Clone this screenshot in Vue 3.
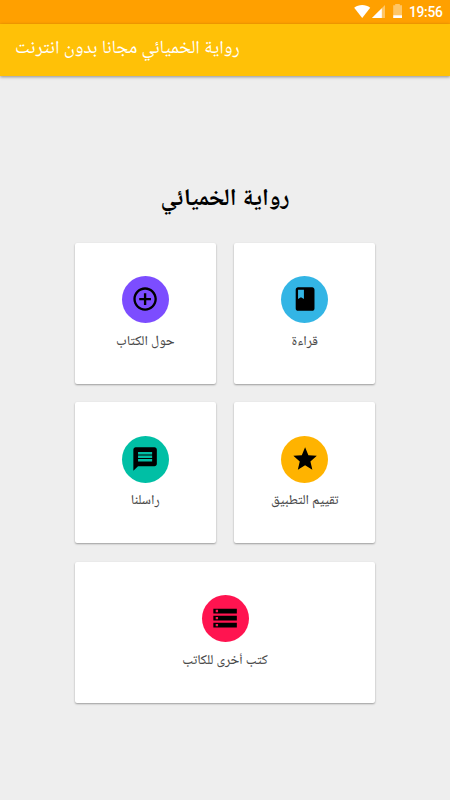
<template>
  <div class="screen">
    <div class="status-bar">
      <svg class="status-icons" width="52" height="24" viewBox="0 0 52 24">
        <path d="M8.2 18 L0.2 7.8 C4.6 4.2 11.8 4.2 16.2 7.8 Z" fill="#fff" />
        <path d="M18 18 L31 5 V18 Z" fill="#fff" fill-opacity="0.4" />
        <path d="M18 18 L27.8 8.2 V18 Z" fill="#fff" />
        <path d="M39.2 5.3 H41.2 V4 H45.8 V5.3 H48 V15.2 H39.2 Z" fill="#fff" fill-opacity="0.4" />
        <path d="M39.2 15.2 H48 V18 H39.2 Z" fill="#fff" />
      </svg>
      <span class="clock">19:56</span>
    </div>

    <header class="app-bar">
      <h1 class="app-title" dir="rtl">رواية الخميائي مجانا بدون انترنت</h1>
    </header>

    <main class="content">
      <h2 class="book-title" dir="rtl">رواية الخميائي</h2>
      <div class="card-grid">
        <button
          v-for="item in items"
          :key="item.id"
          class="card"
          :class="{ 'card-wide': item.wide }"
          type="button"
        >
          <span class="card-icon" :class="`icon-${item.id}`">
            <svg width="28.2" height="28.2" viewBox="0 0 24 24">
              <path :d="item.icon" />
            </svg>
          </span>
          <span class="card-label" dir="rtl">{{ item.label }}</span>
        </button>
      </div>
    </main>
  </div>
</template>

<script setup>
const items = [
  {
    id: 'about',
    label: 'حول الكتاب',
    icon: 'M13 7h-2v4H7v2h4v4h2v-4h4v-2h-4V7zm-1-5C6.48 2 2 6.48 2 12s4.48 10 10 10 10-4.48 10-10S17.52 2 12 2zm0 18c-4.41 0-8-3.59-8-8s3.59-8 8-8 8 3.59 8 8-3.59 8-8 8z'
  },
  {
    id: 'read',
    label: 'قراءة',
    icon: 'M18 2H6c-1.1 0-2 .9-2 2v16c0 1.1.9 2 2 2h12c1.1 0 2-.9 2-2V4c0-1.1-.9-2-2-2zM6 4h5v8l-2.5-1.5L6 12V4z'
  },
  {
    id: 'contact',
    label: 'راسلنا',
    icon: 'M20 2H4c-1.1 0-1.99.9-1.99 2L2 22l4-4h14c1.1 0 2-.9 2-2V4c0-1.1-.9-2-2-2zM6 6h12v2H6V6zm0 3h12v2H6V9zm12 5H6v-2h12v2z'
  },
  {
    id: 'rate',
    label: 'تقييم التطبيق',
    icon: 'M12 17.27L18.18 21l-1.64-7.03L22 9.24l-7.19-.61L12 2 9.19 8.63 2 9.24l5.46 4.73L5.82 21z'
  },
  {
    id: 'more',
    label: 'كتب أخرى للكاتب',
    wide: true,
    icon: 'M2 20h20v-4H2v4zm2-3h2v2H4v-2zM2 4v4h20V4H2zm4 3H4V5h2v2zm-4 7h20v-4H2v4zm2-3h2v2H4v-2z'
  }
]
</script>

<style>
body {
  margin: 0;
  background: #eeeeee;
}
</style>

<style scoped>
.screen {
  display: flex;
  flex-direction: column;
  width: 100%;
  height: 100vh;
  overflow: hidden;
  background: #eeeeee;
  font-family: 'Noto Naskh Arabic UI', 'Noto Naskh Arabic', 'DejaVu Sans', sans-serif;
}

.status-bar {
  display: flex;
  flex: none;
  align-items: center;
  justify-content: flex-end;
  box-sizing: border-box;
  height: 24px;
  padding-right: 8px;
  background: #ffa000;
}

.status-icons {
  margin-right: 3px;
}

.clock {
  width: 33px;
  padding-top: 1px;
  font-family: Roboto, sans-serif;
  font-size: 13.8px;
  font-weight: 500;
  line-height: 23px;
  letter-spacing: -0.3px;
  white-space: nowrap;
  color: #fff;
}

.app-bar {
  display: flex;
  flex: none;
  align-items: center;
  box-sizing: border-box;
  height: 52px;
  padding: 0 15px 2px;
  background: #ffc107;
  box-shadow: 0 1px 3px rgba(0, 0, 0, 0.4);
}

.app-title {
  margin: 0;
  font-size: 18.8px;
  font-weight: 400;
  line-height: 28px;
  white-space: nowrap;
  color: #fff;
}

.content {
  display: flex;
  flex: 1;
  flex-direction: column;
  align-items: center;
  padding-top: 104px;
}

.book-title {
  height: 38px;
  margin: 0 0 24.5px;
  font-size: 23.8px;
  font-weight: 700;
  line-height: 38px;
  white-space: nowrap;
  color: #000;
}

.card-grid {
  display: grid;
  grid-template-columns: 141px 141px;
  grid-auto-rows: 141px;
  gap: 18.5px;
}

.card {
  display: flex;
  flex-direction: column;
  align-items: center;
  margin: 0;
  padding: 33.5px 0 0;
  border: none;
  border-radius: 2px;
  background: #fff;
  box-shadow: 0 1px 2px rgba(0, 0, 0, 0.35);
  font-family: inherit;
  cursor: pointer;
}

.card-wide {
  grid-column: 1 / -1;
}

.card-icon {
  display: flex;
  flex: none;
  align-items: center;
  justify-content: center;
  width: 47px;
  height: 47px;
  border-radius: 50%;
}

.icon-about {
  background: #7c4dff;
}

.icon-read {
  background: #33b5e5;
}

.icon-contact {
  background: #00bfa5;
}

.icon-rate {
  background: #ffb300;
}

.icon-more {
  background: #ff1450;
}

.card-label {
  height: 24px;
  margin-top: 6.5px;
  font-size: 13.7px;
  font-weight: 500;
  line-height: 24px;
  white-space: nowrap;
  color: #4a4a4a;
}
</style>
